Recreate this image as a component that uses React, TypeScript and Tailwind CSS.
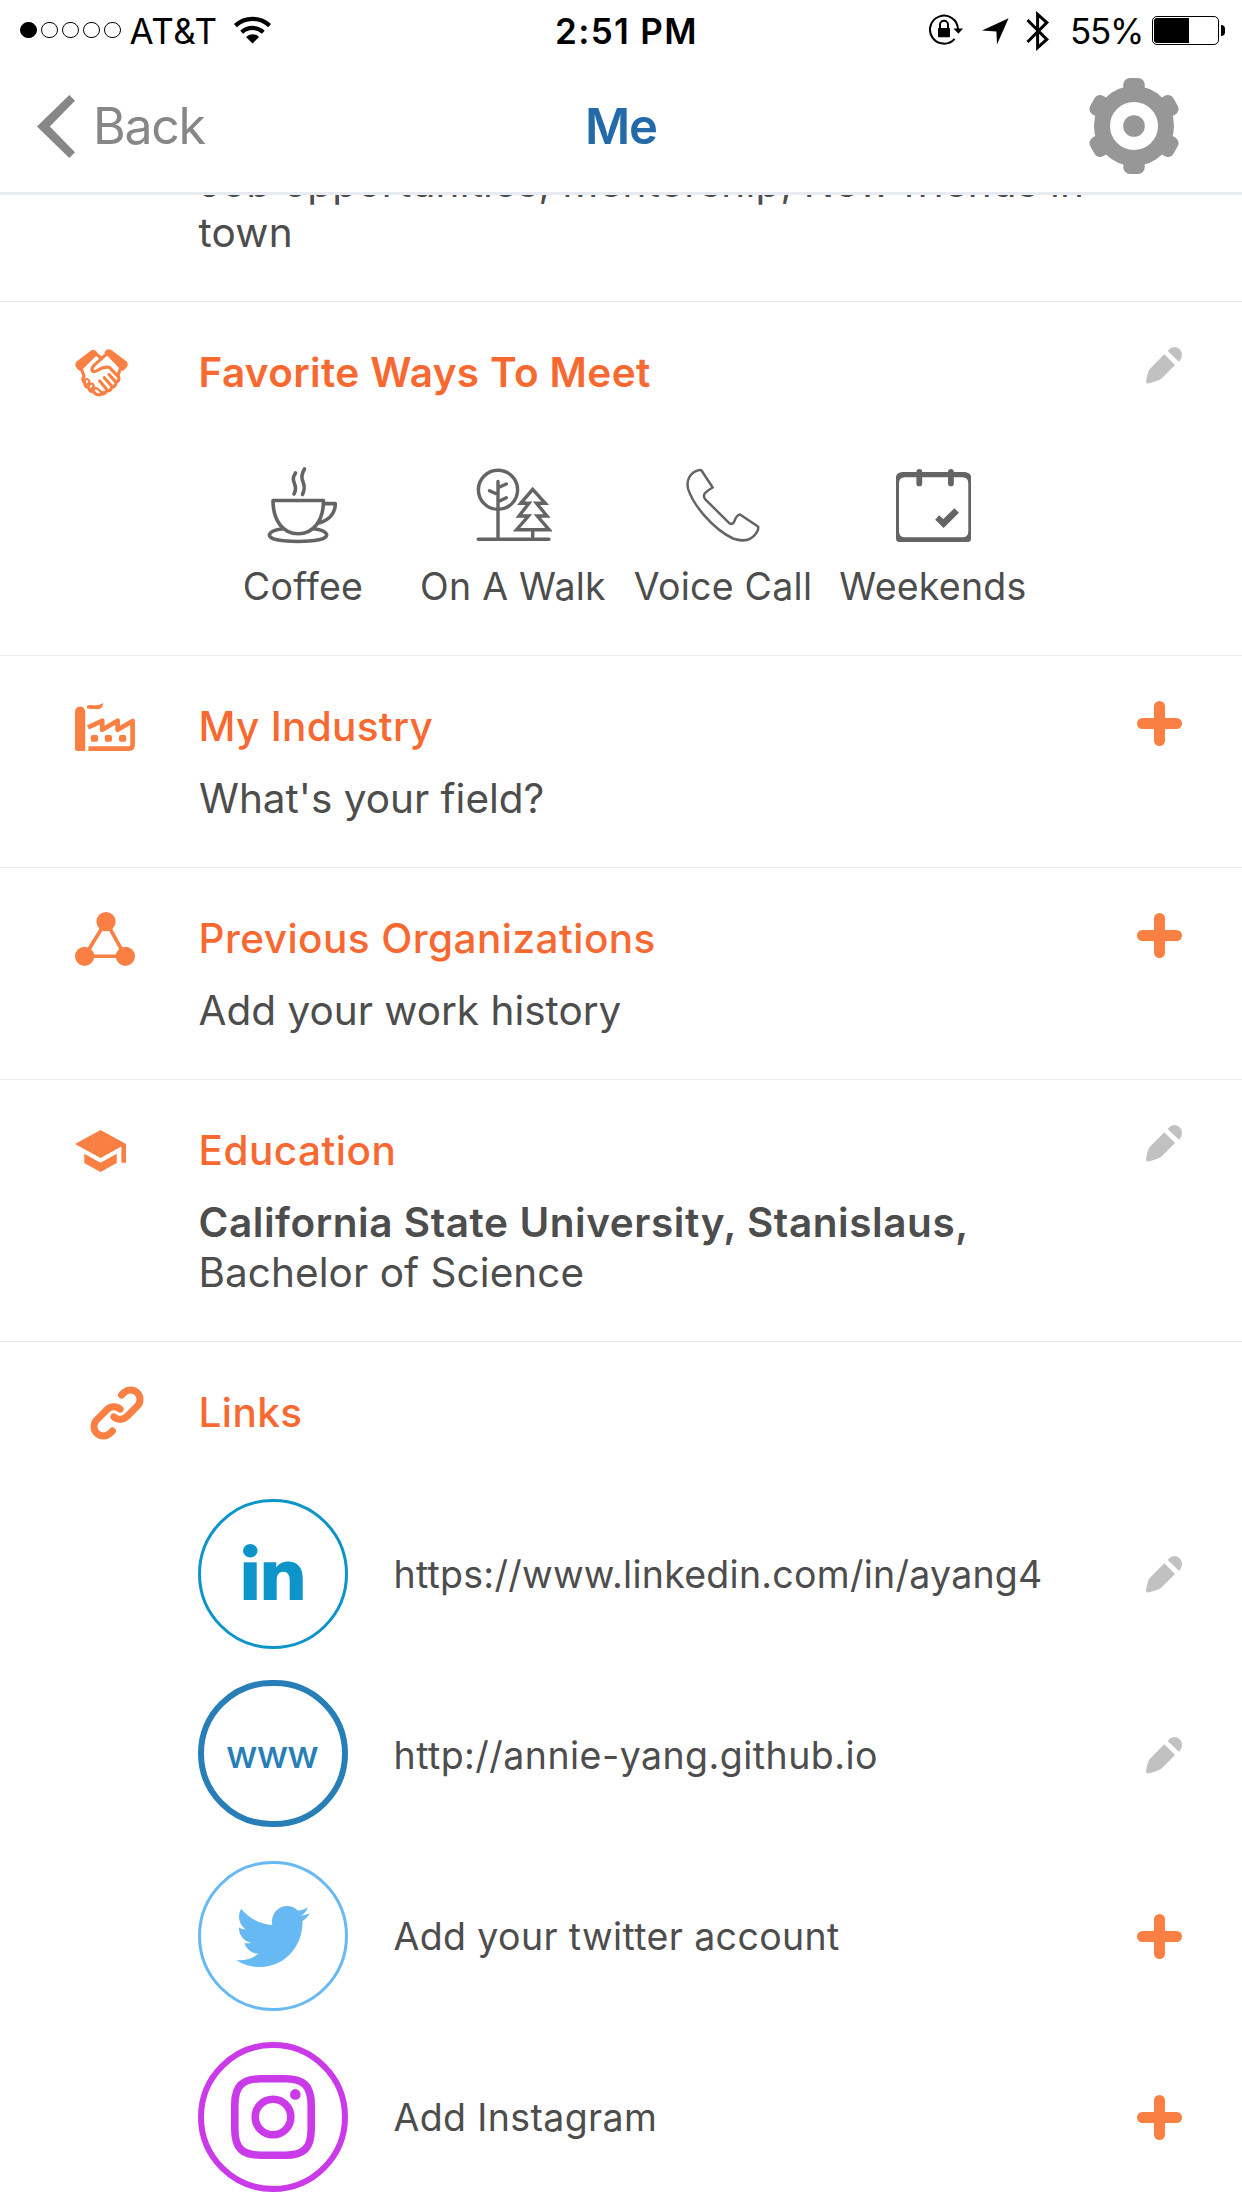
import React from "react";
import type { ReactNode } from "react";

/* ---------- status bar icons ---------- */

const Wifi = () => (
  <svg className="h-7 w-[37px]" viewBox="0 0 37 28" fill="none" stroke="#000" strokeWidth="4.2">
    <path d="M1.4 9.6A25 25 0 0 1 35.6 9.6" />
    <path d="M7.7 16.2A15.8 15.8 0 0 1 29.3 16.2" />
    <path d="M18.5 27.5L12 20.9A9.3 9.3 0 0 1 25 20.9Z" fill="#000" stroke="none" />
  </svg>
);

const RotationLock = () => (
  <svg className="h-8 w-9" viewBox="0 0 36 32" fill="none" stroke="#000" strokeWidth="2">
    <path d="M29 15A14 14 0 1 0 25.6 24.8" />
    <path d="M24.5 14.5H34L29.4 19.8Z" fill="#000" stroke="none" />
    <rect x="9" y="14" width="12" height="9.3" rx="1" fill="#000" stroke="none" />
    <path d="M11 15V10.8a4 4 0 0 1 8 0V15" />
  </svg>
);

const LocationArrow = () => (
  <svg className="h-[27px] w-[27px]" viewBox="0 0 27 27">
    <path d="M0 12.4L26.6 .2L15 26.6L14.4 13.4Z" />
  </svg>
);

const Bluetooth = () => (
  <svg className="h-[42px] w-6" viewBox="0 0 24 42" fill="none" stroke="#000" strokeWidth="3">
    <path d="M1.5 10L20.8 29.5L11.6 37.6V4.4L20.8 12.5L1.5 32" />
  </svg>
);

/* ---------- header icons ---------- */

const Chevron = () => (
  <svg className="h-[63px] w-[38px]" viewBox="0 0 38 63" fill="#878787">
    <path d="M32.3 0L38 5.7L12.8 31.6L38 57.3L32.3 63L0 31.6Z" />
  </svg>
);

const Gear = () => (
  <svg className="h-24 w-[90px]" viewBox="0 0 90 96" fill="#979797">
    {[0, 60, 120, 180, 240, 300].map((a) => (
      <rect key={a} x="34.3" y="0" width="21.4" height="22" rx="6.5" transform={`rotate(${a} 45 48)`} />
    ))}
    <circle cx="45" cy="48" r="32" fill="none" stroke="#979797" strokeWidth="16" />
    <circle cx="45" cy="48" r="10.8" />
  </svg>
);

/* ---------- section icons ---------- */

const Handshake = () => (
  <svg className="h-12 w-[53px]" viewBox="27 27 159 144" preserveAspectRatio="none" fill="none" stroke="#f97f42" strokeWidth="9.5" strokeLinecap="round" strokeLinejoin="round">
    <path d="M76 31Q84 26 92 35L94 44L44 94Q32 89 28 76Q27 69 33 64Z" fill="#f97f42" stroke="none" />
    <path d="M137 31Q129 26 121 29L115 38L168 93Q180 89 185 76Q186 69 181 64Z" fill="#f97f42" stroke="none" />
    <path d="M88 40L104 53" />
    <path d="M120 44L84 76Q74 87 80 94Q88 97 102 87Q114 80 130 82L155 108" />
    <path d="M46 86L54 108Q47 122 56 128Q56 141 68 143Q70 155 83 155Q88 166 102 164L112 158" />
    <path d="M56 122Q60 113 68 120Q74 127 63 133M68 137Q74 127 82 133Q86 142 76 147M82 150Q87 141 94 146L108 158" strokeWidth="6.5" />
    <path d="M163 86L156 106Q164 121 151 127Q149 141 137 142Q134 154 122 153Q116 162 108 162" />
    <path d="M129 104L148 124M115 113L135 136M101 123L121 147" />
  </svg>
);

const Factory = () => (
  <svg className="h-12 w-[60px]" viewBox="0 0 60 48" fill="#f97f42">
    <path d="M0 8.5A5 5 0 0 1 10.2 8.5V48H2.5Q0 48 0 45.5Z" />
    <path d="M12 3Q14 1.6 18 2.4T28 .2Q27.600 5.800 23 6T12 5Z" />
    <path d="M12 3Q14 2.200 18 2.600Q25 3.400 28 0Q27.600 5.600 23 6.200Q19 6 12 5.200Z" />
    <path d="M13 24.4L27.2 17.8V26.8L42.6 17.8V26.8L57.6 18V41.7Q57.6 45.6 53.7 45.6H13.4" fill="none" stroke="#f97f42" strokeWidth="4.7" strokeLinejoin="round" />
    <rect x="15.8" y="32" width="7.2" height="6.8" rx="1.8" />
    <rect x="29.8" y="32" width="7.2" height="6.8" rx="1.8" />
    <rect x="44" y="32" width="7.2" height="6.8" rx="1.8" />
  </svg>
);

const Network = () => (
  <svg className="h-[54px] w-[60px]" viewBox="0 0 60 54" fill="#f97f42">
    <path d="M31 9.5L9.6 44.3H50.4Z" fill="none" stroke="#f97f42" strokeWidth="3.6" />
    <circle cx="31" cy="9.6" r="9.6" />
    <circle cx="9.6" cy="44.3" r="9.6" />
    <circle cx="50.4" cy="44.3" r="9.6" />
  </svg>
);

const GradCap = () => (
  <svg className="h-[42px] w-[51px]" viewBox="1 3 22 18" preserveAspectRatio="none" fill="#f97f42">
    <path d="M5 13.18v4L12 21l7-3.82v-4L12 17l-7-3.82zM12 3L1 9l11 6 9-4.91V17h2V9L12 3z" />
  </svg>
);

const linkHalf = "M31.6 9L34.3 6.3A9.5 9.5 0 0 1 47.7 19.7L36.9 30.5A9.5 9.5 0 0 1 23.9 30.9";
const Chain = () => (
  <svg className="h-[54px] w-[54px]" viewBox="0 0 54 54" fill="none" stroke="#f97f42" strokeWidth="7" strokeLinecap="round">
    <path d={linkHalf} />
    <path d={linkHalf} transform="rotate(180 27 27)" />
  </svg>
);

/* ---------- action icons ---------- */

const Pencil = () => (
  <svg className="h-[37px] w-9" viewBox="0 0 36 37" fill="#c1c1c1">
    <path d="M18.3 7.2L29 18L15.5 31.6Q14.4 32.7 12 33.6Q7 35.6 2 36.5Q0 36.6 0 34.6Q.6 28.5 2.6 24Q3 22.7 4 21.7Z" />
    <path d="M22 3.4Q25 0 28.6 0A7.7 7.7 0 0 1 36 7.8Q36 11.4 33.6 14.2Q33 14.8 32.2 14.1L22.2 4.4Q21.6 3.8 22 3.4Z" />
  </svg>
);

const Plus = () => (
  <svg className="h-[45px] w-[45px]" viewBox="0 0 45 45" stroke="#f97f42" strokeWidth="11" strokeLinecap="round">
    <path d="M22.5 5.5V39.5M5.5 22.5H39.5" />
  </svg>
);

/* ---------- ways to meet icons ---------- */

const Coffee = () => (
  <svg className="h-20 w-[72px]" viewBox="0 -1 72 80" fill="none" stroke="#646464" strokeWidth="3.6" strokeLinecap="round" strokeLinejoin="round">
    <path d="M6 33.5H56.5C56.5 54 46 66.8 31.2 66.8S6 54 6 33.5Z" />
    <path d="M57 36.6H68.3C68.3 46 62.5 53 52.5 55.8" />
    <path d="M16 61.8C-1 64 -1 70.6 10 72.8C22 75 40 75 52 72.8C63 70.6 63 64 46.6 61.8" />
    <path d="M28.5 6C22 16 32.5 16.5 27 27" />
    <path d="M37.5 2C30 14 41.5 15 35.5 27.5" />
  </svg>
);

const Trees = () => (
  <svg className="h-20 w-[77px]" viewBox="0 -1 77 80" fill="none" stroke="#646464" strokeWidth="3.4" strokeLinecap="round" strokeLinejoin="round">
    <circle cx="23" cy="22.8" r="19.6" />
    <path d="M23 14.5V72M23 20.7L31.3 17M14.5 23.7L23 27.5M23 34.7L31.3 30.7M3.2 72.3H74M57.7 63V72" />
    <path d="M57.7 22.3L70.3 36.3H61.5L72 49H62.3L74 62.7H41.5L53.5 49H44L54 36.3H45.7Z" strokeLinejoin="miter" />
  </svg>
);

const Phone = () => (
  <svg className="h-20 w-[76px]" viewBox="0 -1 76 80" fill="none" stroke="#646464" strokeWidth="2.5" strokeLinejoin="round">
    <path d="M16.5 3.5L27.7 20.5Q19 25.5 18.9 28.8Q19 31 20.3 32.4L44.5 56.3Q47 58 49 55Q51.5 48 55 47.5L73 59.5Q74 62.5 71 66.5C66 73.5 58 75 48 71.5C28 62 8 38 3 21.5C1 12 6 5.5 13 3.4Q15.3 2.7 16.5 3.5Z" />
  </svg>
);

const Calendar = () => (
  <svg className="h-20 w-[75px]" viewBox="0 -3 75 80" fill="#646464">
    <path fillRule="evenodd" d="M6 3H69Q75 4 75 8V69.5Q75 73 71.5 73H3.5Q0 73 0 69.5V8Q0 4 6 3ZM9 8.3Q3 8.3 3 14.3V62.3Q3 68.3 9 68.3H66.3Q72.3 68.3 72.3 62.3V14.3Q72.3 8.3 66.3 8.3Z" />
    <rect x="20.4" y="0" width="5.8" height="17.3" rx="2.9" />
    <rect x="52" y="0" width="5.8" height="17.3" rx="2.9" />
    <path d="M39.2 50.7L43 46.3L47.3 50L58.4 39.3L63 43.7L47.6 59Z" />
  </svg>
);

/* ---------- social icons ---------- */

const LinkedIn = () => (
  <svg className="-mt-1 h-14 w-[60px]" viewBox="0 0 60 56" fill="#0d94c9">
    <ellipse cx="7.3" cy="6.7" rx="7.3" ry="6.7" />
    <rect x=".7" y="18.3" width="13" height="37.7" />
    <path d="M20.7 18.3H33.3V23.5C35.5 20 39.5 17.5 45 17.5C54.5 17.5 59.7 23.5 59.7 34.5V56H46.7V36C46.7 31 44.5 27.8 40.3 27.8C36 27.8 33.7 31 33.7 36V56H20.7Z" />
  </svg>
);

const Twitter = () => (
  <svg className="h-[61px] w-[74px]" viewBox="0 2.25 24 19.5" preserveAspectRatio="none" fill="#66b9f3">
    <path d="M23.953 4.57a10 10 0 01-2.825.775 4.958 4.958 0 002.163-2.723c-.951.555-2.005.959-3.127 1.184a4.92 4.92 0 00-8.384 4.482C7.69 8.095 4.067 6.13 1.64 3.162a4.822 4.822 0 00-.666 2.475c0 1.71.87 3.213 2.188 4.096a4.904 4.904 0 01-2.228-.616v.06a4.923 4.923 0 003.946 4.827 4.996 4.996 0 01-2.212.085 4.936 4.936 0 004.604 3.417 9.867 9.867 0 01-6.102 2.105c-.39 0-.779-.023-1.17-.067a13.995 13.995 0 007.557 2.209c9.053 0 13.998-7.496 13.998-13.985 0-.21 0-.42-.015-.63A9.935 9.935 0 0024 4.59z" />
  </svg>
);

const Instagram = () => (
  <svg className="h-[84px] w-[84px]" viewBox="0 0 84 84" fill="none" stroke="#cb3ae8" strokeWidth="7.6">
    <path d="M30 3.8H54C73 3.8 80.2 11 80.2 30V54C80.2 73 73 80.2 54 80.2H30C11 80.2 3.8 73 3.8 54V30C3.8 11 11 3.8 30 3.8Z" />
    <circle cx="42" cy="42" r="17.8" />
    <circle cx="64.3" cy="19.4" r="5.3" fill="#cb3ae8" stroke="none" />
  </svg>
);

/* ---------- building blocks ---------- */

type SectionProps = {
  icon: ReactNode;
  iconClass: string;
  title: string;
  titleClass: string;
  action?: "edit" | "add";
  className: string;
  children?: ReactNode;
};

function Section({ icon, iconClass, title, titleClass, action, className, children }: SectionProps) {
  return (
    <section className={`border-t border-[#e9ebee] ${className}`}>
      <div className="flex h-[96px] items-start">
        <div className={`w-[198.5px] shrink-0 ${iconClass}`}>{icon}</div>
        <h2 className={`mt-[46px] flex-1 whitespace-nowrap text-[40.5px] leading-[50px] text-[#f76931] ${titleClass}`}>{title}</h2>
        {action === "edit" && <button className="mt-[45px] mr-[60px]"><Pencil /></button>}
        {action === "add" && <button className="mt-[45px] mr-[60px]"><Plus /></button>}
      </div>
      {children}
    </section>
  );
}

const ways = [
  { label: "Coffee", icon: <Coffee /> },
  { label: "On A Walk", icon: <Trees /> },
  { label: "Voice Call", icon: <Phone /> },
  { label: "Weekends", icon: <Calendar /> },
];

const links = [
  { text: "https://www.linkedin.com/in/ayang4", tracking: "tracking-[0.26px]", ring: "h-[150px] border-[3px] border-[#0d94c9]", icon: <LinkedIn />, edit: true },
  {
    text: "http://annie-yang.github.io",
    tracking: "tracking-[0.46px]",
    ring: "mb-[3px] h-[147px] border-[6px] border-[#287fb8]",
    icon: <span className="pr-[2px] text-[38px] font-medium leading-none tracking-[-0.9px] text-[#287fb8]">www</span>,
    edit: true,
  },
  { text: "Add your twitter account", tracking: "tracking-[0.37px]", ring: "h-[150px] border-[3px] border-[#66b9f3]", icon: <Twitter />, edit: false },
  { text: "Add Instagram", tracking: "tracking-[0.37px]", ring: "h-[150px] border-[6px] border-[#cb3ae8]", icon: <Instagram />, edit: false },
];

export default function App() {
  return (
    <div className="h-[2208px] w-[1242px] overflow-hidden bg-white font-['Inter','Liberation_Sans',sans-serif] text-[#4d4d4d]">
      <header className="h-[195px] border-b-[3px] border-[#e8ecf2] bg-white text-black">
        <div className="flex h-[60px] items-center text-[35px] leading-[60px]">
          <div className="flex w-[555px] items-center pl-5">
            <div className="flex gap-[4.5px]">
              <i className="size-[16.5px] rounded-full border border-black bg-black" />
              <i className="size-[16.5px] rounded-full border border-black" />
              <i className="size-[16.5px] rounded-full border border-black" />
              <i className="size-[16.5px] rounded-full border border-black" />
              <i className="size-[16.5px] rounded-full border border-black" />
            </div>
            <span className="mt-[2px] ml-[9px] w-[104px] tracking-[0.6px]">AT&amp;T</span>
            <Wifi />
          </div>
          <span className="mt-[2px] w-[374px] font-semibold tracking-[1.35px]">2:51 PM</span>
          <RotationLock />
          <div className="mt-[2px] ml-[17px]"><LocationArrow /></div>
          <div className="mt-[2px] ml-[17px]"><Bluetooth /></div>
          <span className="mt-[2px] ml-5 w-[82px] tracking-[-1.28px]">55%</span>
          <div className="mt-px flex items-center gap-[2px]">
            <div className="h-[29px] w-[67px] rounded-[5px] border border-black p-px">
              <div className="h-full w-[35px] rounded-l-[3px] bg-black" />
            </div>
            <div className="h-[11px] w-1 rounded-r-full bg-black" />
          </div>
        </div>
        <div className="flex h-[132px] items-center">
          <div className="ml-[37px] flex w-[548px] items-center">
            <Chevron />
            <span className="ml-[18px] text-[50px] leading-[60px] tracking-[-1.29px] text-[#878787]">Back</span>
          </div>
          <h1 className="mt-[2px] w-[504px] text-[49px] font-semibold leading-[60px] tracking-[-1.2px] text-[#246aa8]">Me</h1>
          <Gear />
        </div>
      </header>

      <section className="h-[106px] overflow-hidden pl-[198.5px] text-[40.5px] leading-[50px]">
        <p className="-mt-[37px] tracking-[0.2px]">
          Job opportunities, Mentorship, New friends in<br />town
        </p>
      </section>

      <Section className="h-[354px]" icon={<Handshake />} iconClass="pt-[47px] pl-[75px]" title="Favorite Ways To Meet" titleClass="font-semibold tracking-[0.37px]" action="edit">
        <div className="mt-[68px] ml-[198px] grid w-[840px] grid-cols-4">
          {ways.map((w) => (
            <div key={w.label} className="flex flex-col items-center">
              {w.icon}
              <span className="mt-[17px] whitespace-nowrap text-[37.5px] leading-[48px] tracking-[0.25px]">{w.label}</span>
            </div>
          ))}
        </div>
      </Section>

      <Section className="h-[212px]" icon={<Factory />} iconClass="pt-[47px] pl-[75px]" title="My Industry" titleClass="font-medium tracking-[0.3px]" action="add">
        <p className="mt-[22px] pl-[199px] text-[40.5px] leading-[50px]">What's your field?</p>
      </Section>

      <Section className="h-[212px]" icon={<Network />} iconClass="pt-[44px] pl-[75px]" title="Previous Organizations" titleClass="font-medium tracking-[0.44px]" action="add">
        <p className="mt-[22px] pl-[198.5px] text-[40.5px] leading-[50px]">Add your work history</p>
      </Section>

      <Section className="h-[262px]" icon={<GradCap />} iconClass="pt-[50px] pl-[75px]" title="Education" titleClass="font-medium tracking-[0.5px]" action="edit">
        <div className="mt-[22px] pl-[198.5px] text-[40.5px] leading-[50px]">
          <p className="font-semibold tracking-[0.57px]">California State University, Stanislaus,</p>
          <p className="tracking-[0.06px]">Bachelor of Science</p>
        </div>
      </Section>

      <Section className="h-[867px]" icon={<Chain />} iconClass="pt-[44px] pl-[90px]" title="Links" titleClass="font-medium tracking-[0.4px]">
        <ul className="mt-[61px] flex flex-col gap-[31px]">
          {links.map((l) => (
            <li key={l.text} className="flex h-[150px] items-center pr-[60px] pl-[198px]">
              <div className={`flex w-[150px] shrink-0 items-center justify-center rounded-full ${l.ring}`}>{l.icon}</div>
              <span className={`mt-[2px] ml-[45.5px] flex-1 whitespace-nowrap text-[37.5px] leading-[48px] ${l.tracking}`}>{l.text}</span>
              <button>{l.edit ? <Pencil /> : <Plus />}</button>
            </li>
          ))}
        </ul>
      </Section>
    </div>
  );
}
